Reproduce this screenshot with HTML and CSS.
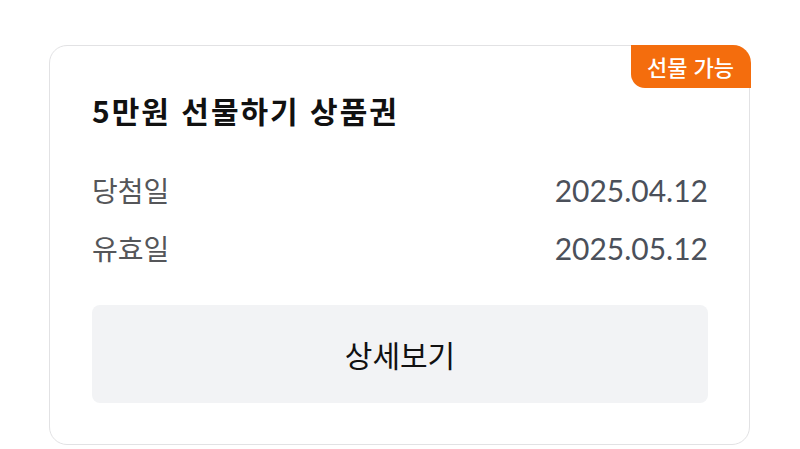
FILE: index.html
```html
<!DOCTYPE html>
<html lang="ko">
<head>
<meta charset="utf-8">
<link rel="stylesheet" href="styles.css">
</head>
<body>
<div class="card">
  <div class="badge">선물 가능</div>
  <h1 class="title">5만원 선물하기 상품권</h1>
  <div class="rows">
    <div class="row"><span class="label">당첨일</span><span class="value">2025.04.12</span></div>
    <div class="row"><span class="label">유효일</span><span class="value">2025.05.12</span></div>
  </div>
  <button class="detail">상세보기</button>
</div>
</body>
</html>
```
FILE: styles.css
```css
html, body {
  margin: 0;
  padding: 0;
  background: #ffffff;
}
body {
  font-family: "Noto Sans CJK KR", "Noto Sans", sans-serif;
  padding: 45px 0 0 49px;
}
.card {
  position: relative;
  box-sizing: border-box;
  width: 701px;
  height: 400px;
  border: 1.5px solid #e2e2e4;
  border-radius: 18px;
  padding: 44px 41px 0 42px;
  display: flex;
  flex-direction: column;
}
.badge {
  position: absolute;
  top: -1.5px;
  right: -1.5px;
  width: 120px;
  height: 43px;
  background: #f46d0d;
  color: #ffffff;
  font-size: 22px;
  font-weight: 500;
  line-height: 43px;
  text-align: center;
  border-radius: 0 18px 0 14px;
}
.title {
  margin: 0;
  font-size: 30px;
  font-weight: 700;
  line-height: 40px;
  color: #111111;
  letter-spacing: 2px;
}
.rows {
  margin-top: 42px;
  display: flex;
  flex-direction: column;
  gap: 22px;
}
.row {
  display: flex;
  justify-content: space-between;
  align-items: center;
  height: 36px;
}
.label {
  font-size: 28px;
  color: #555659;
  font-weight: 400;
}
.value {
  font-family: Lato, "Noto Sans", sans-serif;
  font-size: 30px;
  color: #4b505a;
}
.detail {
  margin-top: 39px;
  height: 98px;
  width: 100%;
  border: none;
  border-radius: 8px;
  background: #f2f3f5;
  font-family: "Noto Sans CJK KR", sans-serif;
  font-size: 30px;
  font-weight: 400;
  color: #111111;
  padding: 0;
}
```
